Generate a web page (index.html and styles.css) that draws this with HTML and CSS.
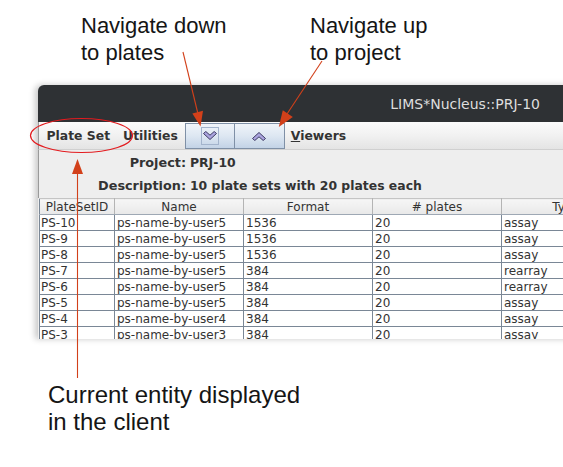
FILE: index.html
```html
<!DOCTYPE html>
<html>
<head>
<meta charset="utf-8">
<link rel="stylesheet" href="styles.css">
</head>
<body>
<div class="stage">
  <div class="window">
    <div class="titlebar"><span class="title">LIMS*Nucleus::PRJ-10</span></div>
    <div class="menubar">
      <span class="menu menu-plateset">Plate Set</span>
      <span class="menu menu-utilities">Utilities</span>
      <div class="navbtns">
        <button class="nav nav-down"><span class="focus">
          <svg width="14" height="10" viewBox="0 0 14 10"><polygon points="0.5,2.5 2.8,0.5 7,4.2 11.2,0.5 13.5,2.5 7,8.5" fill="#aaa4de" stroke="#3d3b63" stroke-width="1" stroke-linejoin="miter"/></svg>
        </span></button>
        <button class="nav nav-up"><span class="nofocus">
          <svg width="14" height="10" viewBox="0 0 14 10"><polygon points="0.5,7.5 2.8,9.5 7,5.8 11.2,9.5 13.5,7.5 7,1.5" fill="#aaa4de" stroke="#3d3b63" stroke-width="1" stroke-linejoin="miter"/></svg>
        </span></button>
      </div>
      <span class="menu menu-viewers"><u>V</u>iewers</span>
    </div>
    <div class="info">
      <span class="lbl">Project:</span><span class="val">PRJ-10</span>
      <span class="lbl">Description:</span><span class="val">10 plate sets with 20 plates each</span>
    </div>
    <table class="grid">
      <colgroup><col class="c1"><col class="c2"><col class="c3"><col class="c4"><col class="c5"></colgroup>
      <thead>
        <tr><th>PlateSetID</th><th>Name</th><th>Format</th><th># plates</th><th>Type</th></tr>
      </thead>
      <tbody>
        <tr><td>PS-10</td><td>ps-name-by-user5</td><td>1536</td><td>20</td><td>assay</td></tr>
        <tr><td>PS-9</td><td>ps-name-by-user5</td><td>1536</td><td>20</td><td>assay</td></tr>
        <tr><td>PS-8</td><td>ps-name-by-user5</td><td>1536</td><td>20</td><td>assay</td></tr>
        <tr><td>PS-7</td><td>ps-name-by-user5</td><td>384</td><td>20</td><td>rearray</td></tr>
        <tr><td>PS-6</td><td>ps-name-by-user5</td><td>384</td><td>20</td><td>rearray</td></tr>
        <tr><td>PS-5</td><td>ps-name-by-user5</td><td>384</td><td>20</td><td>assay</td></tr>
        <tr><td>PS-4</td><td>ps-name-by-user4</td><td>384</td><td>20</td><td>assay</td></tr>
        <tr><td>PS-3</td><td>ps-name-by-user3</td><td>384</td><td>20</td><td>assay</td></tr>
      </tbody>
    </table>
  </div>

  <div class="note note-down">Navigate down<br>to plates</div>
  <div class="note note-up">Navigate up<br>to project</div>
  <div class="note note-current">Current entity displayed<br>in the client</div>

  <svg class="overlay" width="563" height="467" viewBox="0 0 563 467">
    <ellipse cx="81.5" cy="135.5" rx="51" ry="17" fill="none" stroke="#e31b1f" stroke-width="1.2"/>
    <line x1="183" y1="52" x2="198" y2="114" stroke="#d2401a" stroke-width="1.1"/>
    <polygon points="200.5,126.5 203,110.8 192.4,113.4" fill="#d2401a"/>
    <line x1="322" y1="61" x2="287" y2="114" stroke="#d2401a" stroke-width="1.1"/>
    <polygon points="278.8,127 292.8,116.9 282.8,110.3" fill="#d2401a"/>
    <line x1="77.5" y1="378" x2="77.5" y2="172" stroke="#d2401a" stroke-width="1.1"/>
    <polygon points="77.5,159 83,174 72,174" fill="#d2401a"/>
  </svg>
</div>
</body>
</html>
```
FILE: styles.css
```css
html, body {
  margin: 0;
  padding: 0;
  background: #ffffff;
  overflow: hidden;
}

.stage {
  position: relative;
  width: 563px;
  height: 467px;
  overflow: hidden;
  background: #ffffff;
}

.window {
  position: absolute;
  left: 38px;
  top: 85px;
  width: 560px;
  height: 254px;
  overflow: hidden;
  background: #eeeeee;
  border-radius: 6px 6px 0 0;
  box-shadow: -3px 0 6px rgba(0, 0, 0, 0.22);
  display: flex;
  flex-direction: column;
}

.titlebar {
  height: 37px;
  flex: none;
  background: #2e3134;
  display: flex;
  align-items: center;
  justify-content: flex-end;
  padding-right: 58px;
}

.title {
  font-family: "DejaVu Sans", sans-serif;
  font-size: 14px;
  color: #dedede;
  padding-top: 1px;
}

.menubar {
  height: 27px;
  flex: none;
  display: flex;
  align-items: center;
  background: linear-gradient(#fbfbfb, #f1f1f1 50%, #e4e4e4);
  border-bottom: 1px solid #d0d0d0;
  border-left: 1px solid #9a9a9a;
  font-family: "DejaVu Sans", sans-serif;
  font-weight: bold;
  font-size: 12.4px;
  color: #333333;
}

.menu {
  white-space: nowrap;
}

.menu-plateset {
  margin-left: 7.5px;
}

.menu-utilities {
  margin-left: 13px;
}

.menu-viewers {
  margin-left: 6px;
}

.navbtns {
  display: flex;
  margin-left: 7px;
  align-self: flex-start;
  margin-top: 1px;
}

.nav {
  width: 50px;
  height: 26px;
  margin: 0;
  padding: 0;
  border: 1px solid #7f90a6;
  background: linear-gradient(#f0f4f9, #dde7f2 50%, #c3d3e6);
  display: flex;
  align-items: center;
  justify-content: center;
}

.nav-up {
  border-left: none;
}

.focus {
  width: 16px;
  height: 16px;
  border: 1px solid #a3b4cc;
  display: flex;
  align-items: center;
  justify-content: center;
}

.nofocus {
  width: 18px;
  height: 18px;
  display: flex;
  align-items: center;
  justify-content: center;
}

.nav svg {
  display: block;
}

.info {
  height: 48px;
  flex: none;
  display: grid;
  grid-template-columns: 147px auto;
  grid-auto-rows: 23px;
  column-gap: 4px;
  align-content: start;
  padding-top: 1px;
  box-sizing: border-box;
  font-family: "DejaVu Sans", sans-serif;
  font-weight: bold;
  font-size: 12.4px;
  color: #333333;
  border-left: 1px solid #9a9a9a;
}

.lbl {
  text-align: right;
  line-height: 23px;
  font-size: 12.8px;
}

.val {
  line-height: 23px;
}

.grid {
  border-collapse: collapse;
  table-layout: fixed;
  width: 591px;
  margin-left: 1px;
  font-family: "DejaVu Sans", sans-serif;
  font-size: 12px;
  color: #333333;
  background: #ffffff;
  border-left: 1px solid #7a8796;
}

.c1 { width: 75px; }
.c2 { width: 129px; }
.c3 { width: 129px; }
.c4 { width: 129px; }
.c5 { width: 129px; }

.grid th {
  height: 15px;
  padding: 0;
  font-weight: normal;
  text-align: center;
  background: linear-gradient(#f6f6f6, #e8e8e8);
  border-top: 1px solid #c4c4c4;
  border-right: 1px solid #b4b4b4;
  border-bottom: 1px solid #9ea8b4;
  white-space: nowrap;
  overflow: hidden;
}

.grid td {
  height: 15px;
  padding: 0 0 0 2px;
  line-height: 14px;
  border-right: 1px solid #7a8796;
  border-bottom: 1px solid #7a8796;
  white-space: nowrap;
  overflow: hidden;
}

.grid td:first-child {
  padding-left: 1px;
}

.note {
  position: absolute;
  font-family: "Liberation Sans", Arial, sans-serif;
  color: #151515;
  white-space: nowrap;
}

.note-down {
  left: 81px;
  top: 11.5px;
  font-size: 22px;
  line-height: 27px;
}

.note-up {
  left: 310px;
  top: 11.5px;
  font-size: 22px;
  line-height: 27px;
}

.note-current {
  left: 48px;
  top: 381px;
  font-size: 24px;
  line-height: 27px;
}

.overlay {
  position: absolute;
  left: 0;
  top: 0;
}
```
